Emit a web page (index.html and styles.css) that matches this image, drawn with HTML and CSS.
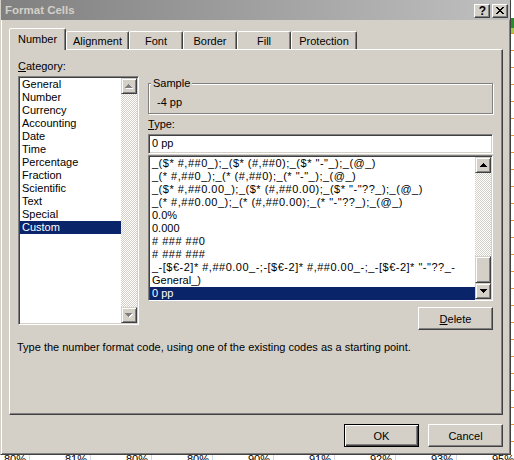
FILE: index.html
```html
<!DOCTYPE html>
<html lang="en">
<head>
  <meta charset="UTF-8" />
  <title>Format Cells</title>
  <link rel="stylesheet" href="styles.css">
</head>
<body>

<div class="screen">
  <div class="dialog">
    <div class="titlebar">
      <span class="title">Format Cells</span>
      <div class="title-btns">
        <span class="tbtn help">?</span>
        <span class="tbtn">
          <svg width="8" height="7" viewBox="0 0 8 7"><path d="M0 0h2v1H0zM6 0h2v1H6zM1 1h2v1H1zM5 1h2v1H5zM2 2h4v1H2zM3 3h2v1H3zM2 4h4v1H2zM1 5h2v1H1zM5 5h2v1H5zM0 6h2v1H0zM6 6h2v1H6z"/></svg>
        </span>
      </div>
    </div>

    <div class="tabs">
      <div class="tab tab-number active">Number</div>
      <div class="tab tab-align">Alignment</div>
      <div class="tab tab-font">Font</div>
      <div class="tab tab-border">Border</div>
      <div class="tab tab-fill">Fill</div>
      <div class="tab tab-prot">Protection</div>
    </div>

    <div class="panel">
      <div class="format-body">
        <div class="category">
          <div class="label"><u>C</u>ategory:</div>
          <div class="listbox cat-list">
            <div class="items">
              <div class="item">General</div>
              <div class="item">Number</div>
              <div class="item">Currency</div>
              <div class="item">Accounting</div>
              <div class="item">Date</div>
              <div class="item">Time</div>
              <div class="item">Percentage</div>
              <div class="item">Fraction</div>
              <div class="item">Scientific</div>
              <div class="item">Text</div>
              <div class="item">Special</div>
              <div class="item selected">Custom</div>
            </div>
            <div class="scrollbar">
              <div class="sbtn">
                <svg width="8" height="5" viewBox="0 0 8 5"><path fill="#fff" d="M4 1h1v1h1v1h1v1h1v1H1V4h1V3h1V2h1z"/><path fill="#808080" d="M3 0h1v1h1v1h1v1h1v1H0V3h1V2h1V1h1z"/></svg>
              </div>
              <div class="track"></div>
              <div class="sbtn">
                <svg width="8" height="5" viewBox="0 0 8 5"><path fill="#fff" d="M1 1h7v1H7v1H6v1H5v1H4V4H3V3H2V2H1z"/><path fill="#808080" d="M0 0h7v1H6v1H5v1H4v1H3V3H2V2H1V1H0z"/></svg>
              </div>
            </div>
          </div>
        </div>

        <div class="right">
          <div class="sample">
            <span class="sample-label">Sample</span>
            -4 pp
          </div>
          <div class="label type-label"><u>T</u>ype:</div>
          <div class="textbox">0 pp</div>
          <div class="listbox fmt-list">
            <div class="items">
              <div class="item code">_($* #,##0_);_($* (#,##0);_($* "-"_);_(@_)</div>
              <div class="item code">_(* #,##0_);_(* (#,##0);_(* "-"_);_(@_)</div>
              <div class="item code">_($* #,##0.00_);_($* (#,##0.00);_($* "-"??_);_(@_)</div>
              <div class="item code">_(* #,##0.00_);_(* (#,##0.00);_(* "-"??_);_(@_)</div>
              <div class="item">0.0%</div>
              <div class="item">0.000</div>
              <div class="item code"># ### ##0</div>
              <div class="item code"># ### ###</div>
              <div class="item code">_-[$€-2]* #,##0.00_-;-[$€-2]* #,##0.00_-;_-[$€-2]* "-"??_-</div>
              <div class="item">General_)</div>
              <div class="item selected">0 pp</div>
            </div>
            <div class="scrollbar">
              <div class="sbtn">
                <svg width="7" height="4" viewBox="0 0 7 4"><path d="M3 0h1v1h1v1h1v1h1v1H0V3h1V2h1V1h1z"/></svg>
              </div>
              <div class="track">
                <div class="thumb"></div>
              </div>
              <div class="sbtn">
                <svg width="7" height="4" viewBox="0 0 7 4"><path d="M0 0h7v1H6v1H5v1H4v1H3V3H2V2H1V1H0z"/></svg>
              </div>
            </div>
          </div>
          <div class="delete-row">
            <button class="btn"><u>D</u>elete</button>
          </div>
        </div>
      </div>

      <p class="hint">Type the number format code, using one of the existing codes as a starting point.</p>
    </div>

    <div class="buttons">
      <button class="btn default">OK</button>
      <button class="btn">Cancel</button>
    </div>
  </div>

  <div class="sheet-edge"></div>

  <div class="sheet-bottom">
    <span class="cell first">80%</span>
    <span class="cell">81%</span>
    <span class="cell">80%</span>
    <span class="cell">80%</span>
    <span class="cell">90%</span>
    <span class="cell">91%</span>
    <span class="cell">92%</span>
    <span class="cell">93%</span>
    <span class="cell">95%</span>
  </div>
</div>

</body>
</html>
```

FILE: styles.css
```css
* {
  box-sizing: border-box;
}
html, body {
  margin: 0;
  padding: 0;
  background: #fff;
  font-family: 'Liberation Sans', Arial, sans-serif;
  font-size: 11px;
  color: #000;
}
.screen {
  display: grid;
  grid-template-columns: 511px 3px;
  grid-template-rows: 455px 5px;
  width: 514px;
  height: 460px;
  overflow: hidden;
}

/* window frame */
.dialog {
  display: flex;
  flex-direction: column;
  background: #d4d0c8;
  border: 1px solid;
  border-top: 0;
  border-color: #d4d0c8 #404040 #404040 #d4d0c8;
  box-shadow: inset 1px 0 #fff, inset -1px -1px #808080;
}
.titlebar {
  height: 20px;
  display: flex;
  align-items: center;
  justify-content: space-between;
  padding: 0 2px 0 4px;
  background: linear-gradient(to right, #808080, #c0c0c0);
}
.title {
  color: #d4d0c8;
  font-weight: 700;
  font-size: 11.5px;
}
.title-btns {
  display: flex;
  gap: 2px;
  margin-top: 1px;
}
.tbtn {
  width: 16px;
  height: 14px;
  display: flex;
  align-items: center;
  justify-content: center;
  background: #d4d0c8;
  border: 1px solid;
  border-color: #fff #404040 #404040 #fff;
  box-shadow: inset -1px -1px #808080;
}
.tbtn.help {
  font-weight: 700;
  font-size: 12px;
  line-height: 12px;
  padding-left: 1px;
}

/* tabs */
.tabs {
  display: flex;
  align-items: flex-end;
  height: 21px;
  margin: 8px 0 0 8px;
}
.tab {
  height: 18px;
  padding-top: 3px;
  line-height: 13px;
  text-align: center;
  background: #d4d0c8;
  border: 1px solid;
  border-bottom: 0;
  border-color: #fff #404040 transparent #fff;
  border-radius: 2px 2px 0 0;
  box-shadow: inset -1px 0 #808080;
}
.tab.active {
  height: 22px;
  padding-top: 4px;
  margin-bottom: -1px;
  position: relative;
  z-index: 1;
}
.tab-number { width: 57px; }
.tab-align  { width: 63px; }
.tab-font   { width: 54px; }
.tab-border { width: 54px; }
.tab-fill   { width: 54px; }
.tab-prot   { width: 66px; }

.panel {
  height: 366px;
  margin: 0 7px 0 8px;
  padding: 10px 9px 0 8px;
  border: 1px solid;
  border-color: #fff #404040 #404040 #fff;
  box-shadow: inset -1px -1px #808080;
}
.format-body {
  display: flex;
  gap: 9px;
  height: 270px;
}
.category {
  width: 121px;
}
.label {
  line-height: 13px;
  height: 13px;
}

/* sunken boxes */
.listbox, .textbox {
  background: #fff;
  border: 1px solid;
  border-color: #808080 #fff #fff #808080;
  box-shadow: inset 1px 1px #404040, inset -1px -1px #d4d0c8;
  padding: 1px;
}
.listbox {
  display: flex;
}
.items {
  flex: 1;
  min-width: 0;
}
.item {
  height: 13px;
  line-height: 13px;
  padding-left: 2px;
  white-space: nowrap;
  overflow: hidden;
}
.item.code {
  letter-spacing: 0.5px;
}
.item.selected {
  background: #0a246a;
  color: #fff;
}
.cat-list {
  margin-top: 3px;
  height: 249px;
}
.scrollbar {
  width: 16px;
  display: flex;
  flex-direction: column;
}
.sbtn, .thumb {
  height: 16px;
  display: flex;
  align-items: center;
  justify-content: center;
  background: #d4d0c8;
  border: 1px solid;
  border-color: #d4d0c8 #404040 #404040 #d4d0c8;
  box-shadow: inset 1px 1px #fff, inset -1px -1px #808080;
}
.track {
  flex: 1;
  display: flex;
  flex-direction: column;
  justify-content: flex-end;
  background: repeating-conic-gradient(#fff 0 25%, #d4d0c8 0 50%) 0 0 / 2px 2px;
}
.thumb {
  height: 27px;
}

.right {
  flex: 1;
  min-width: 0;
  display: flex;
  flex-direction: column;
}
.sample {
  position: relative;
  margin-top: 23px;
  height: 31px;
  padding: 12px 0 0 8px;
  line-height: 13px;
  border: 1px solid #808080;
  box-shadow: inset 1px 1px #fff, 1px 1px #fff;
}
.sample-label {
  position: absolute;
  top: -7px;
  left: 2px;
  padding: 0 2px;
  background: #d4d0c8;
}
.type-label {
  margin-top: 4px;
}
.textbox {
  margin-top: 3px;
  height: 20px;
  padding: 1px 3px;
  line-height: 15px;
}
.fmt-list {
  margin-top: 1px;
  height: 146px;
}
.delete-row {
  display: flex;
  justify-content: flex-end;
  margin-top: 6px;
}

.btn {
  width: 75px;
  height: 23px;
  padding: 0;
  font: inherit;
  color: #000;
  background: #d4d0c8;
  border: 1px solid;
  border-color: #fff #404040 #404040 #fff;
  box-shadow: inset -1px -1px #808080;
}
.btn.default {
  border-color: #000;
  box-shadow: inset 1px 1px #fff, inset -1px -1px #404040, inset -2px -2px #808080;
}
.hint {
  margin: 11px 0 0 -1px;
  line-height: 13px;
}
.buttons {
  display: flex;
  justify-content: flex-end;
  gap: 9px;
  margin: 9px 7px 0 0;
}

/* bits of the worksheet behind the dialog */
.sheet-edge {
  background:
    linear-gradient(#fff 0 18px, #2d8a2d 18px 28px, #a8c848 28px 33px, transparent 33px),
    repeating-linear-gradient(#fff 0 16px, #e8902a 16px 17px);
}
.sheet-bottom {
  grid-column: 1 / span 2;
  display: flex;
  overflow: hidden;
  background: #fff;
}
.cell {
  flex: 0 0 61px;
  height: 5px;
  overflow: hidden;
  text-align: right;
  padding-right: 3px;
  line-height: 9px;
  font-size: 11px;
  border-right: 1px solid #d0d7e5;
}
.cell.first {
  flex-basis: 30px;
}
```
